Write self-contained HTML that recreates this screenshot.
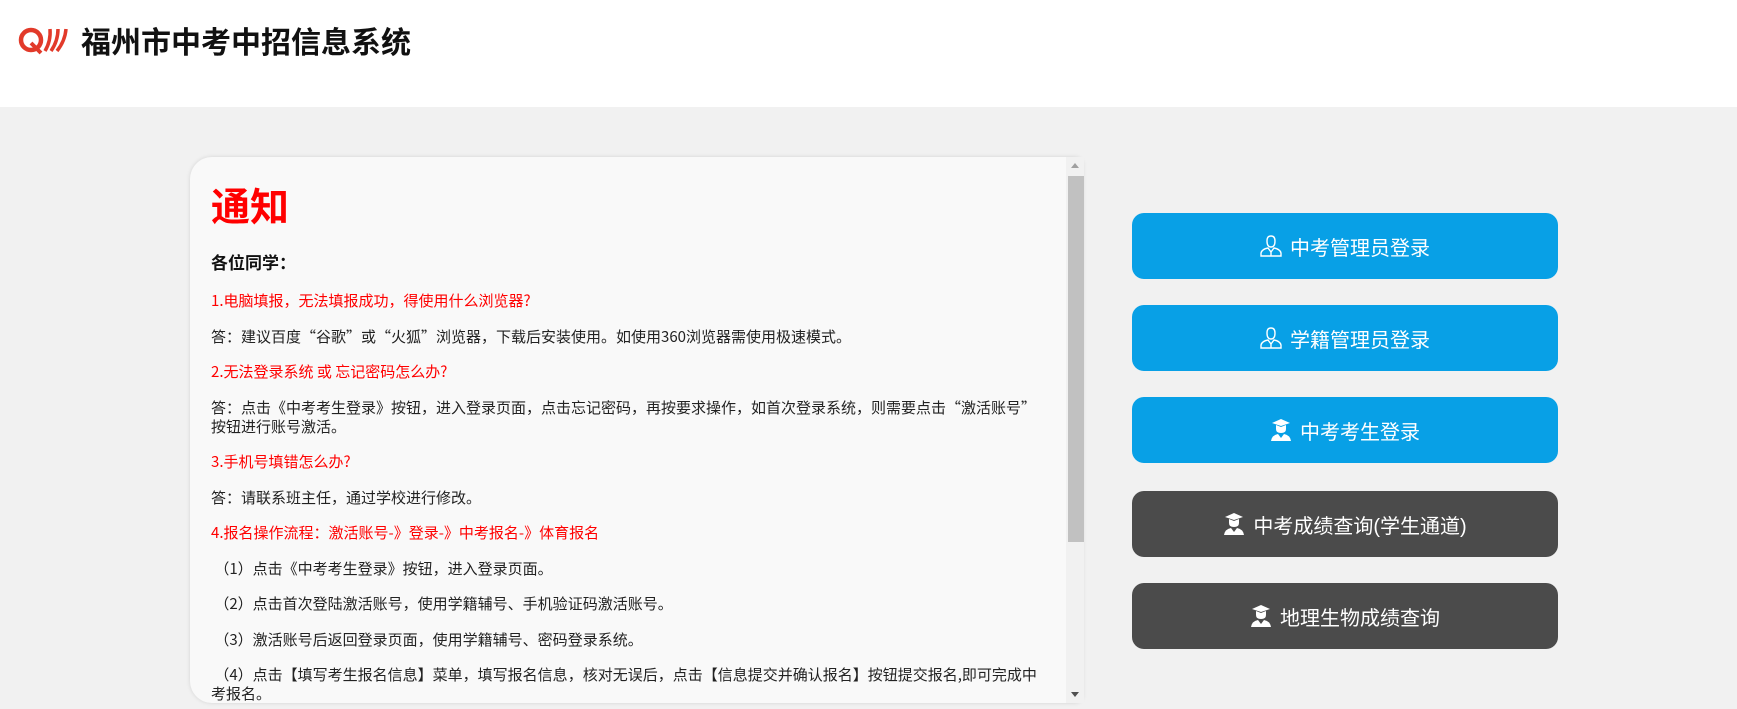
<!DOCTYPE html>
<html><head><meta charset="utf-8"><style>
*{margin:0;padding:0;box-sizing:border-box}
body{width:1737px;height:709px;overflow:hidden;background:#f1f1f1;font-family:"Liberation Sans","Noto Sans CJK SC",sans-serif;position:relative}
.hd{position:absolute;left:0;top:0;width:1737px;height:107px;background:#fff}
.hd .t{position:absolute;left:81px;top:24px;font-size:30px;font-weight:bold;color:#111;line-height:40px;letter-spacing:0}
.box{position:absolute;left:190px;top:157px;width:893px;height:546px;background:#f9f9f9;border-radius:22px 8px 8px 22px;box-shadow:0 0 4px rgba(0,0,0,.12);overflow:hidden}
.ct{position:absolute;left:21px;top:0;width:850px}
h1{font-size:39px;color:#f00;font-weight:bold;position:absolute;top:28px;left:0;line-height:48px}
h3{position:absolute;top:95px;left:0;font-size:17px;font-weight:bold;color:#111;line-height:24px}
.ps{position:absolute;top:134px;left:0;width:850px;font-family:"Noto Sans CJK SC","Liberation Sans",sans-serif}
.ps p{font-size:15px;line-height:19px;margin-bottom:16.5px;color:#222;white-space:nowrap}
.ps p.r{color:#f00}
.sb{position:absolute;left:1066px;top:157px;width:18px;height:546px;background:#f1f1f1}
.th{position:absolute;left:1068px;top:176px;width:16px;height:366px;background:#c1c1c1}
.btn{position:absolute;left:1132px;width:426px;height:66px;border-radius:12px;color:#fff;font-size:20px;display:flex;align-items:center;justify-content:center;gap:8px}
.b{background:#08a0e6}.g{background:#4b4b4b}
</style></head><body>
<div class="hd">
<svg style="position:absolute;left:17px;top:27px" width="56" height="28" viewBox="0 0 56 28">
<circle cx="14" cy="13" r="10" fill="none" stroke="#e23a2a" stroke-width="4.5"/>
<path d="M14 16 L24 26" stroke="#e23a2a" stroke-width="4" fill="none"/>
<path d="M28 24 Q34 14 33 2" stroke="#e23a2a" stroke-width="3.5" fill="none"/>
<path d="M34 24 Q41 14 41 2" stroke="#e23a2a" stroke-width="3.5" fill="none"/>
<path d="M40 24 Q48 14 49 2" stroke="#e23a2a" stroke-width="3.5" fill="none"/>
</svg>
<div class="t">福州市中考中招信息系统</div>
</div>
<div class="box"><div class="ct">
<h1>通知</h1>
<h3>各位同学：</h3>
<div class="ps">
<p class="r">1.电脑填报，无法填报成功，得使用什么浏览器?</p>
<p>答：建议百度“谷歌”或“火狐”浏览器，下载后安装使用。如使用360浏览器需使用极速模式。</p>
<p class="r">2.无法登录系统 或 忘记密码怎么办?</p>
<p>答：点击《中考考生登录》按钮，进入登录页面，点击忘记密码，再按要求操作，如首次登录系统，则需要点击“激活账号”<br>按钮进行账号激活。</p>
<p class="r">3.手机号填错怎么办?</p>
<p>答：请联系班主任，通过学校进行修改。</p>
<p class="r">4.报名操作流程：激活账号-》登录-》中考报名-》体育报名</p>
<p>&nbsp;（1）点击《中考考生登录》按钮，进入登录页面。</p>
<p>&nbsp;（2）点击首次登陆激活账号，使用学籍辅号、手机验证码激活账号。</p>
<p>&nbsp;（3）激活账号后返回登录页面，使用学籍辅号、密码登录系统。</p>
<p>&nbsp;（4）点击【填写考生报名信息】菜单，填写报名信息，核对无误后，点击【信息提交并确认报名】按钮提交报名,即可完成中<br>考报名。</p>
</div></div></div>
<div class="sb"></div><div class="th"></div>
<svg style="position:absolute;left:1071px;top:163px" width="8" height="6"><path d="M0 5L4 0L8 5Z" fill="#a0a0a0"/></svg>
<svg style="position:absolute;left:1071px;top:692px" width="8" height="6"><path d="M0 0L4 5L8 0Z" fill="#505050"/></svg>
<div class="btn b" style="top:213px"><svg width="22" height="22" viewBox="0 0 22 22" fill="none" stroke="#fff" stroke-width="1.4"><path d="M7 6Q7 1 11 1Q15 1 15 6Q15 12 11 12Q7 12 7 6Z"/><path d="M1 21V18Q2 14 8 13L11 17L14 13Q20 14 21 18V21Z"/><path d="M11 17V21"/></svg>中考管理员登录</div>
<div class="btn b" style="top:305px"><svg width="22" height="22" viewBox="0 0 22 22" fill="none" stroke="#fff" stroke-width="1.4"><path d="M7 6Q7 1 11 1Q15 1 15 6Q15 12 11 12Q7 12 7 6Z"/><path d="M1 21V18Q2 14 8 13L11 17L14 13Q20 14 21 18V21Z"/><path d="M11 17V21"/></svg>学籍管理员登录</div>
<div class="btn b" style="top:397px"><svg width="22" height="22" viewBox="0 0 22 22" fill="#fff"><path d="M2 4L11 0L20 4L11 7Z"/><path d="M6 6V10Q6 14 11 14Q16 14 16 10V6L11 8Z"/><path d="M1 22Q2 16 8 15L11 19L14 15Q20 16 21 22Z"/></svg>中考考生登录</div>
<div class="btn g" style="top:491px"><svg width="22" height="22" viewBox="0 0 22 22" fill="#fff"><path d="M2 4L11 0L20 4L11 7Z"/><path d="M6 6V10Q6 14 11 14Q16 14 16 10V6L11 8Z"/><path d="M1 22Q2 16 8 15L11 19L14 15Q20 16 21 22Z"/></svg>中考成绩查询(学生通道)</div>
<div class="btn g" style="top:583px"><svg width="22" height="22" viewBox="0 0 22 22" fill="#fff"><path d="M2 4L11 0L20 4L11 7Z"/><path d="M6 6V10Q6 14 11 14Q16 14 16 10V6L11 8Z"/><path d="M1 22Q2 16 8 15L11 19L14 15Q20 16 21 22Z"/></svg>地理生物成绩查询</div>
</body></html>
